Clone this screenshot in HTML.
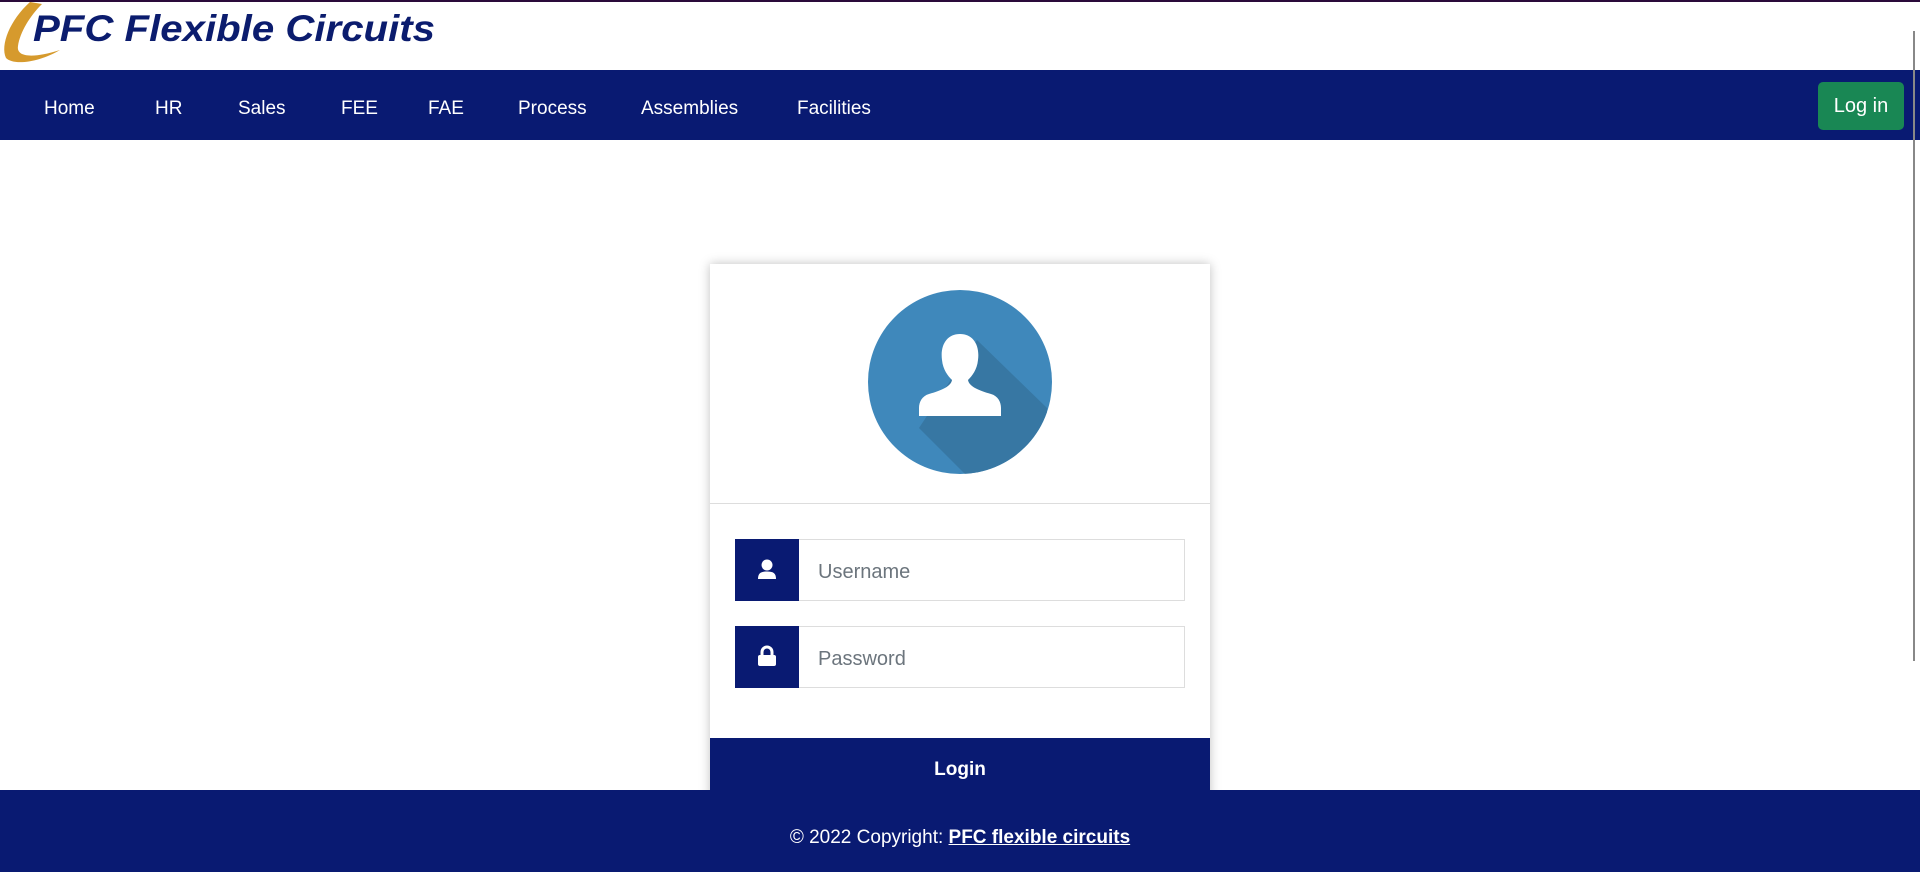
<!DOCTYPE html>
<html><head><meta charset="utf-8"><style>
*{box-sizing:border-box;margin:0;padding:0}
html,body{width:1920px;height:872px;overflow:hidden;background:#fff;font-family:"Liberation Sans",sans-serif}
.top{position:absolute;left:0;top:0;width:1920px;height:2px;background:#2a0a3a}
.logo{position:absolute;left:0;top:0;width:440px;height:70px}
.nav{position:absolute;left:0;top:70px;width:1920px;height:70px;background:#091a72}
.nav a{position:absolute;top:28px;color:#fff;font-size:19px;text-decoration:none}
.btn{position:absolute;left:1818px;top:82px;width:86px;height:48px;background:#198754;border-radius:5px;color:#fff;font-size:20px;text-align:center;line-height:48px}
.sb{position:absolute;left:1913px;top:31px;width:2px;height:630px;background:#888}
.card{position:absolute;left:710px;top:264px;width:500px;height:560px;background:#fff;box-shadow:0 0 10px rgba(0,0,0,.25)}
.div{position:absolute;left:0;top:239px;width:500px;height:1px;background:#ddd}
.inp{position:absolute;left:25px;width:450px;height:62px;border:1px solid #ddd}
.inp .ic{position:absolute;left:-1px;top:-1px;width:64px;height:62px;background:#091a72}
.inp span{position:absolute;left:82px;top:21px;font-size:20px;color:#6c757d}
.login{position:absolute;left:0;top:474px;width:500px;height:60px;background:#091a72;color:#fff;font-weight:bold;font-size:19px;text-align:center;line-height:64px}
.foot{position:absolute;left:0;top:790px;width:1920px;height:82px;background:#091a72;color:#fff;font-size:19px;text-align:center;line-height:96px}
.foot b{text-decoration:underline}
</style></head><body>
<div class="top"></div>
<svg class="logo" viewBox="0 0 440 70">
<path d="M30 2 C10 20 0 45 6 58 C14 66 40 62 60 50 C35 58 16 58 18 46 C20 32 30 16 42 4 Z" fill="#d69a2d"/>
<text x="33" y="41" font-family="Liberation Sans" font-weight="bold" font-style="italic" font-size="37" fill="#0b1c6e" textLength="402" lengthAdjust="spacingAndGlyphs">PFC Flexible Circuits</text>
</svg>
<div class="nav">
<a style="left:44px">Home</a><a style="left:155px">HR</a><a style="left:238px">Sales</a><a style="left:341px">FEE</a><a style="left:428px">FAE</a><a style="left:518px">Process</a><a style="left:641px">Assemblies</a><a style="left:797px">Facilities</a>
</div>
<div class="btn">Log in</div>
<div class="sb"></div>
<div class="card">
<svg style="position:absolute;left:157px;top:26px" width="186" height="186" viewBox="0 0 186 186">
<defs><clipPath id="c"><circle cx="93" cy="92" r="92"/></clipPath></defs>
<circle cx="93" cy="92" r="92" fill="#3f88bb"/>
<path d="M110 50 L180 118 L180 186 L100 186 L52 138 Z" fill="#3777a3" clip-path="url(#c)"/>
<path d="M93 44 C106 44 113 55 111 70 C110 80 105 86 101 90 C102 96 110 100 124 104 C131 106 134 112 134 118 L134 126 L52 126 L52 118 C52 112 55 106 62 104 C76 100 84 96 85 90 C81 86 76 80 75 70 C73 55 80 44 93 44 Z" fill="#fff"/>
</svg>
<div class="div"></div>
<div class="inp" style="top:275px"><div class="ic"><svg style="position:absolute;left:22px;top:20px" width="20" height="22" viewBox="0 0 20 22"><circle cx="10" cy="6" r="5.5" fill="#fff"/><path d="M1 20 C1 14 4 12.5 10 12.5 C16 12.5 19 14 19 20 Z" fill="#fff"/></svg></div><span>Username</span></div>
<div class="inp" style="top:362px"><div class="ic"><svg style="position:absolute;left:22px;top:19px" width="20" height="22" viewBox="0 0 20 22"><path d="M5 10 V7 A5 5 0 0 1 15 7 V10" stroke="#fff" stroke-width="3" fill="none"/><rect x="1" y="10" width="18" height="11" rx="2" fill="#fff"/></svg></div><span>Password</span></div>
<div class="login">Login</div>
</div>
<div class="foot">© 2022 Copyright: <b>PFC flexible circuits</b></div>
</body></html>
